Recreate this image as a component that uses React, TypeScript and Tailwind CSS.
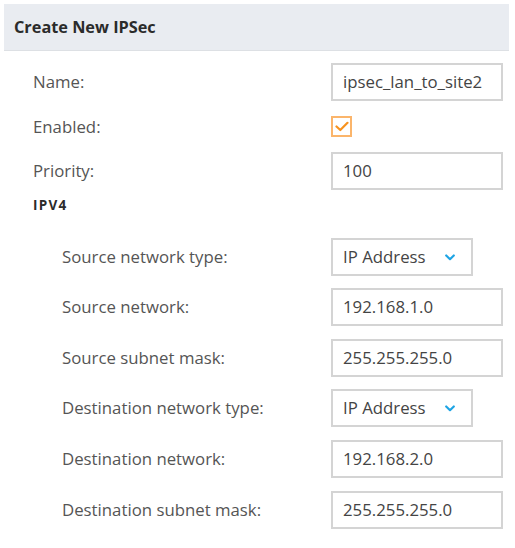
import React from "react";

const font = { fontFamily: '"Open Sans", "Liberation Sans", sans-serif' };

function TextRow({ label, value, sub, mt }: { label: string; value: string; sub?: boolean; mt: string }) {
  return (
    <div className={`flex items-center h-[38px] ${mt}`}>
      <div className={`${sub ? "pl-[62px]" : "pl-[33px]"} w-[331px] shrink-0 text-[16.8px] text-[#555]`}>{label}</div>
      <div className="w-[172px] h-[38px] border-2 border-[#d4d4d4] flex items-center pl-[10px] text-[16.8px] text-[#444]">{value}</div>
    </div>
  );
}

function SelectRow({ label, value, mt }: { label: string; value: string; mt: string }) {
  return (
    <div className={`flex items-center h-[38px] ${mt}`}>
      <div className="pl-[62px] w-[331px] shrink-0 text-[16.8px] text-[#555]">{label}</div>
      <div className="w-[142px] h-[38px] border-2 border-[#d4d4d4] flex items-center pl-[10px] text-[16.8px] text-[#444]">
        <span>{value}</span>
        <svg className="ml-[19px]" width="10" height="7" viewBox="0 0 10 7">
          <path d="M1.2 1.5 L5 5.2 L8.8 1.5" fill="none" stroke="#1ea4e4" strokeWidth="2.2" strokeLinecap="round" strokeLinejoin="round" />
        </svg>
      </div>
    </div>
  );
}

export default function App() {
  return (
    <div className="w-[515px] h-[548px] bg-white pt-[4px] pl-[4px]" style={font}>
      <div className="w-[505px] h-[47px] bg-[#e9ecf1] border-b border-[#dde0e4] flex items-center pl-[10px] text-[16.3px] font-bold text-[#2b2b2b]">
        Create New IPSec
      </div>
      <div className="-ml-[4px]">
        <TextRow label="Name:" value="ipsec_lan_to_site2" mt="mt-[12px]" />
        <div className="flex items-center h-[21px] mt-[15px]">
          <div className="pl-[33px] w-[331px] shrink-0 text-[16.8px] text-[#555]">Enabled:</div>
          <div className="w-[21px] h-[21px] border-2 border-[#fbb56b] flex items-center justify-center">
            <svg width="14" height="11" viewBox="0 0 14 11">
              <path d="M1.5 5.5 L5.3 9 L12.5 1.8" fill="none" stroke="#f7921e" strokeWidth="2.2" strokeLinecap="round" strokeLinejoin="round" />
            </svg>
          </div>
        </div>
        <TextRow label="Priority:" value="100" mt="mt-[15px]" />
        <div className="h-[18px] mt-[6px] pl-[33px] flex items-center text-[13.5px] font-bold tracking-[1.3px] text-[#2b2b2b]">IPV4</div>
        <SelectRow label="Source network type:" value="IP Address" mt="mt-[24px]" />
        <TextRow sub label="Source network:" value="192.168.1.0" mt="mt-[12px]" />
        <TextRow sub label="Source subnet mask:" value="255.255.255.0" mt="mt-[13px]" />
        <SelectRow label="Destination network type:" value="IP Address" mt="mt-[12px]" />
        <TextRow sub label="Destination network:" value="192.168.2.0" mt="mt-[13px]" />
        <TextRow sub label="Destination subnet mask:" value="255.255.255.0" mt="mt-[13px]" />
      </div>
    </div>
  );
}
